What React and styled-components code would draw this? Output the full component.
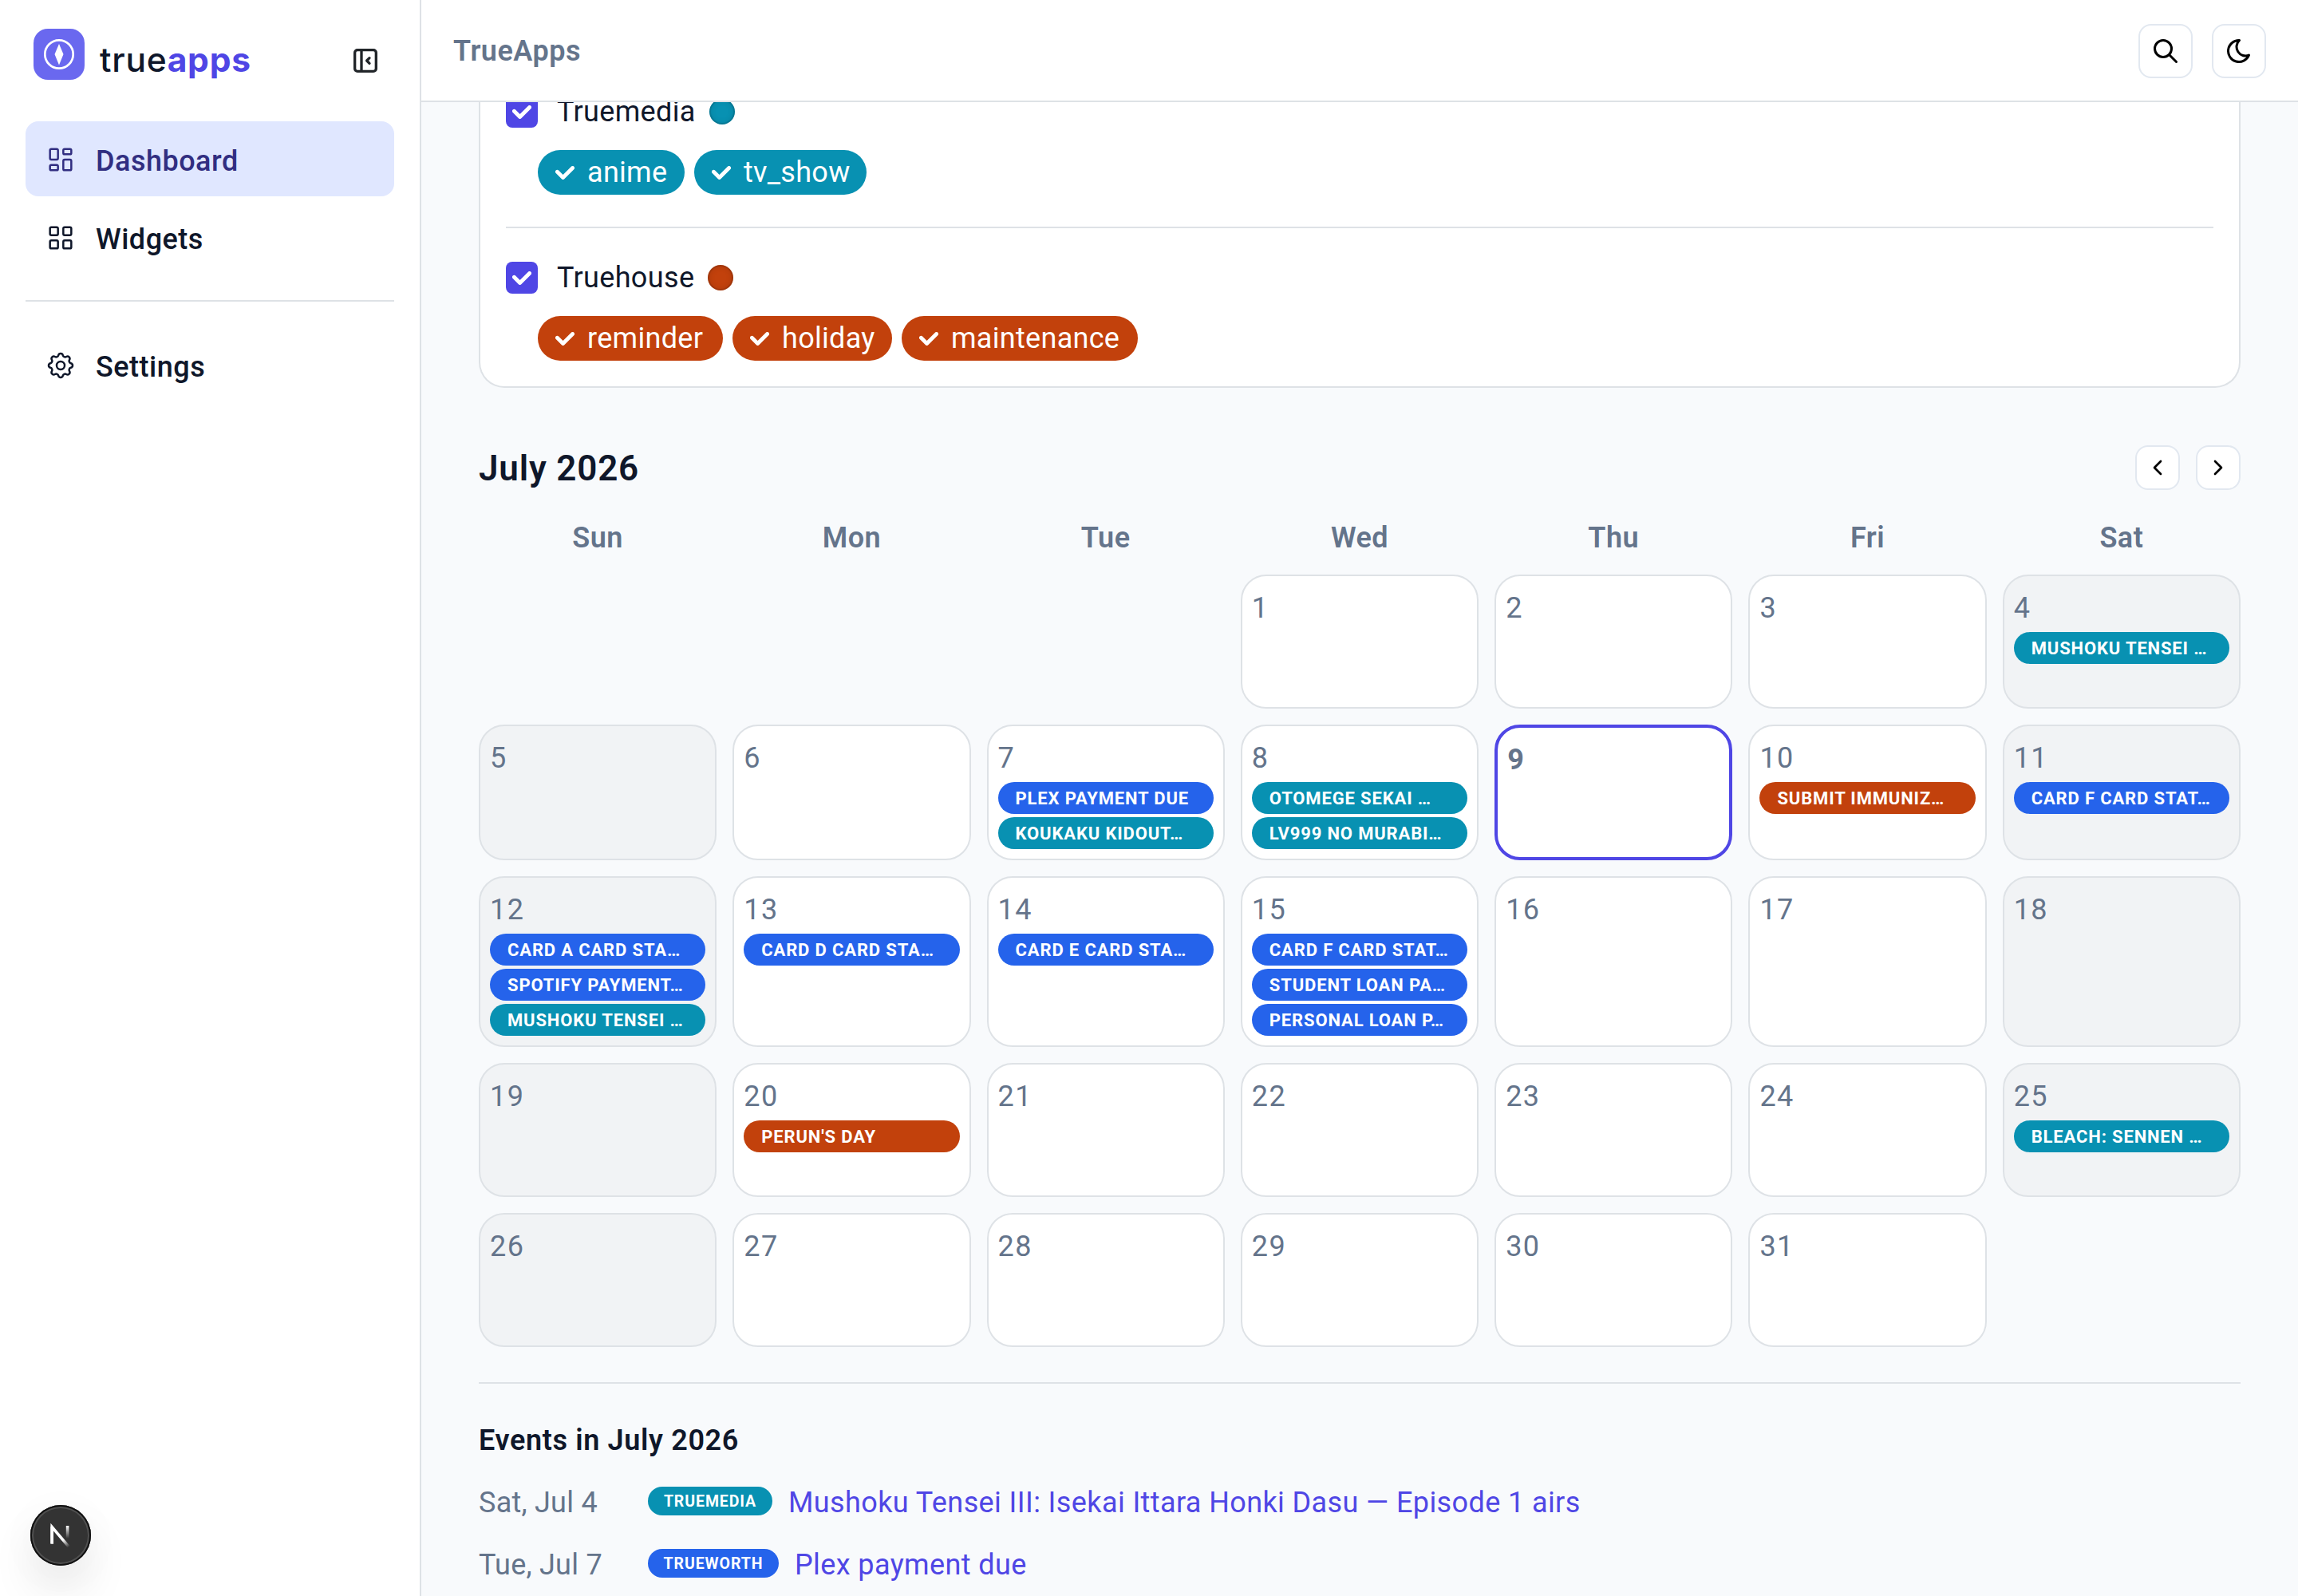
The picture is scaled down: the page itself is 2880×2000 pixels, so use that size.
import React from "react"
import styled, { createGlobalStyle } from "styled-components"
import {
  TbChevronLeft,
  TbChevronRight,
  TbLayoutDashboard,
  TbLayoutGrid,
  TbLayoutSidebarLeftCollapse,
  TbMoon,
  TbSearch,
  TbSettings,
} from "react-icons/tb"

const colors = {
  media: "#0891b2",
  house: "#c2410c",
  worth: "#2563eb",
  primary: "#4f46e5",
  text: "#0f172a",
  dimmed: "#64748b",
  border: "#dee2e6",
}

const GlobalStyle = createGlobalStyle`
  * {
    box-sizing: border-box;
  }
  body {
    margin: 0;
    font-family: Roboto, "Liberation Sans", sans-serif;
    font-size: 36px;
    line-height: 54px;
    color: ${colors.text};
    background: #f8fafc;
    overflow: hidden;
  }
`

const Shell = styled.div`
  display: grid;
  grid-template-columns: 528px 1fr;
  grid-template-rows: 2000px;
  height: 2000px;
  overflow: hidden;
`

const Sidebar = styled.aside`
  display: flex;
  flex-direction: column;
  padding: 36px 32px;
  background: #fff;
  border-right: 2px solid ${colors.border};
`

const Brand = styled.div`
  display: flex;
  align-items: flex-start;
  height: 116px;
  padding-left: 10px;

  > svg:last-child {
    margin: 20px 16px 0 auto;
    color: #212529;
  }
`

const Wordmark = styled.span`
  margin: 12px 0 0 19px;
  font-family: Inter, sans-serif;
  font-size: 42.5px;
  font-weight: 500;
  letter-spacing: 0.8px;

  b {
    color: ${colors.primary};
    font-weight: 700;
  }
`

const NavLink = styled.a`
  display: flex;
  align-items: center;
  height: 94px;
  margin-bottom: 4px;
  padding: 6px 24px 0;
  border-radius: 16px;
  font-weight: 500;
  letter-spacing: 0.5px;
  color: ${p => (p.$active ? "#312e81" : colors.text)};
  background: ${p => (p.$active ? "#e0e7ff" : "transparent")};

  svg {
    margin: -4px 24px 0 0;
    stroke-width: 1.5;
  }
`

const Divider = styled.hr`
  width: 100%;
  height: 2px;
  margin: ${p => p.$margin};
  border: 0;
  background: ${colors.border};
`

const Main = styled.main`
  display: flex;
  flex-direction: column;
  min-width: 0;
  min-height: 0;
`

const Header = styled.header`
  display: flex;
  align-items: center;
  gap: 24px;
  flex: none;
  height: 128px;
  padding: 2px 40px 0;
  background: #fff;
  border-bottom: 2px solid ${colors.border};
`

const AppName = styled.div`
  margin-right: auto;
  font-weight: 600;
  letter-spacing: 0.5px;
  color: ${colors.dimmed};
`

const IconButton = styled.button`
  display: grid;
  place-items: center;
  width: ${p => p.$size}px;
  height: ${p => p.$size}px;
  padding: 0;
  border: 2px solid #e2e8f0;
  border-radius: 16px;
  background: #fff;
  color: #000;
`

const Content = styled.div`
  flex: 1;
  min-height: 0;
  overflow: hidden;
  padding: 0 72px;
`

// the filter card is scrolled under the header, only its lower part shows
const FilterCard = styled.section`
  display: flow-root;
  height: 358px;
  padding: 0 32px;
  border: 2px solid ${colors.border};
  border-top: 0;
  border-radius: 0 0 32px 32px;
  background: #fff;

  > div:first-child {
    margin-top: -8px;
  }
`

const Source = styled.div`
  display: flex;
  align-items: center;
  height: 40px;
  letter-spacing: 0.35px;
`

const Checkbox = styled.span`
  display: grid;
  place-items: center;
  width: 40px;
  height: 40px;
  margin-right: 24px;
  border-radius: 8px;
  background: ${colors.primary};
`

const Swatch = styled.span`
  width: 32px;
  height: 32px;
  margin-left: 17px;
  border-radius: 50%;
  background: ${p => colors[p.$kind]};
  box-shadow: inset 0 0 0 2px rgba(0, 0, 0, 0.1), inset 0 0 8px rgba(0, 0, 0, 0.15);
`

const Chips = styled.div`
  display: flex;
  gap: 12px;
  margin: 28px 0 0 40px;
`

const Chip = styled.span`
  display: flex;
  align-items: center;
  gap: 16px;
  width: ${p => p.$width}px;
  height: 56px;
  padding-left: 22px;
  border-radius: 28px;
  color: #fff;
  letter-spacing: 0.3px;
  background: ${p => colors[p.$kind]};
`

const MonthBar = styled.div`
  display: flex;
  align-items: center;
  gap: 20px;
  height: 56px;
  margin-top: 72px;

  h2 {
    margin: 2px auto 0 0;
    font-size: 44px;
    font-weight: 600;
    letter-spacing: 0.8px;
  }
`

const Week = styled.div`
  display: grid;
  grid-template-columns: repeat(7, 1fr);
  column-gap: 20px;
  margin-top: 33px;
  height: 73px;
  font-weight: 600;
  letter-spacing: 0.5px;
  text-align: center;
  color: ${colors.dimmed};
`

const Month = styled.div`
  display: grid;
  grid-template-columns: repeat(7, minmax(0, 1fr));
  grid-auto-rows: minmax(168px, auto);
  gap: 20px;
`

const Day = styled.div`
  grid-column-start: ${p => p.$start || "auto"};
  display: flex;
  flex-direction: column;
  gap: 4px;
  padding: 12px;
  border: 2px solid ${colors.border};
  border-radius: 32px;
  background: ${p => (p.$weekend ? "#f1f3f5" : "#fff")};
  ${p => p.$today && `border: 4px solid ${colors.primary}; font-weight: 700;`}
`

const DayNumber = styled.span`
  height: 54px;
  padding-top: 1px;
  letter-spacing: 1.4px;
  color: ${colors.dimmed};
`

const EventPill = styled.span`
  height: 40px;
  padding: 0 20px 0 22px;
  border-radius: 20px;
  font-size: 22px;
  font-weight: 700;
  line-height: 41px;
  letter-spacing: 0.85px;
  white-space: nowrap;
  overflow: hidden;
  color: #fff;
  background: ${p => colors[p.$kind]};
`

const ListTitle = styled.h3`
  margin: 44px 0 23px;
  font-size: 36px;
  font-weight: 600;
  letter-spacing: 0.65px;
`

const EventRow = styled.div`
  display: flex;
  align-items: center;
  height: 54px;
  margin-bottom: 24px;

  time {
    width: 212px;
    padding-top: 2px;
    letter-spacing: 0.25px;
    color: ${colors.dimmed};
  }
  a {
    padding-top: 2px;
    letter-spacing: 0.4px;
    color: ${colors.primary};
  }
`

const SourceBadge = styled.span`
  width: ${p => p.$width}px;
  height: 36px;
  margin: -2px 20px 0 0;
  border-radius: 18px;
  font-size: 19.5px;
  font-weight: 700;
  line-height: 37px;
  letter-spacing: 0.9px;
  text-align: center;
  color: #fff;
  background: ${p => colors[p.$kind]};
`

const DevBadge = styled.div`
  display: grid;
  place-items: center;
  width: 76px;
  height: 76px;
  margin: auto 0 2px 6px;
  border-radius: 50%;
  background: #333;
  box-shadow: inset 0 0 0 2px #111, inset 0 0 0 4px #505050,
    0 32px 64px -16px rgba(0, 0, 0, 0.24), 0 8px 60px rgba(0, 0, 0, 0.03);
`

const CheckMark = () => (
  <svg width="24" height="17" viewBox="0 0 10 7" fill="#fff">
    <path d="M4 4.586L1.707 2.293A1 1 0 1 0 .293 3.707l3 3a.997.997 0 0 0 1.414 0l5-5A1 1 0 1 0 8.293.293L4 4.586z" />
  </svg>
)

const Logo = () => (
  <svg width="64" height="64" viewBox="0 0 64 64">
    <rect width="64" height="64" rx="18" fill="#6a68ef" />
    <circle cx="32" cy="32" r="17.7" fill="none" stroke="#fff" strokeWidth="2.7" />
    <path d="M32 19l5.5 13L32 45.5 26.5 32z" fill="#fff" />
  </svg>
)

const NextLogo = () => (
  <svg width="28" height="30" viewBox="0 0 28 30" fill="none">
    <defs>
      <linearGradient id="diag" x1="14" y1="15" x2="25" y2="29" gradientUnits="userSpaceOnUse">
        <stop offset="0.35" stopColor="#fff" />
        <stop offset="1" stopColor="#fff" stopOpacity="0" />
      </linearGradient>
      <linearGradient id="stem" x1="0" y1="3" x2="0" y2="19" gradientUnits="userSpaceOnUse">
        <stop stopColor="#fff" />
        <stop offset="1" stopColor="#fff" stopOpacity="0" />
      </linearGradient>
    </defs>
    <path d="M3.2 25.5V4.6l21.3 25" stroke="url(#diag)" strokeWidth="3.6" />
    <path d="M3.2 25.5V4" stroke="#fff" strokeWidth="3.6" />
    <path d="M22.6 3v16" stroke="url(#stem)" strokeWidth="3.6" />
  </svg>
)

const sources = [
  { name: "Truemedia", kind: "media", chips: [["anime", 184], ["tv_show", 216]] },
  { name: "Truehouse", kind: "house", chips: [["reminder", 232], ["holiday", 200], ["maintenance", 296]] },
]

const events = {
  4: [["media", "MUSHOKU TENSEI …"]],
  7: [["worth", "PLEX PAYMENT DUE"], ["media", "KOUKAKU KIDOUT…"]],
  8: [["media", "OTOMEGE SEKAI …"], ["media", "LV999 NO MURABI…"]],
  10: [["house", "SUBMIT IMMUNIZ…"]],
  11: [["worth", "CARD F CARD STAT…"]],
  12: [["worth", "CARD A CARD STA…"], ["worth", "SPOTIFY PAYMENT…"], ["media", "MUSHOKU TENSEI …"]],
  13: [["worth", "CARD D CARD STA…"]],
  14: [["worth", "CARD E CARD STA…"]],
  15: [["worth", "CARD F CARD STAT…"], ["worth", "STUDENT LOAN PA…"], ["worth", "PERSONAL LOAN P…"]],
  20: [["house", "PERUN'S DAY"]],
  25: [["media", "BLEACH: SENNEN …"]],
}

const weekdays = ["Sun", "Mon", "Tue", "Wed", "Thu", "Fri", "Sat"]
const FIRST_WEEKDAY = 3
const TODAY = 9

const isWeekend = day => [0, 6].includes((day - 1 + FIRST_WEEKDAY) % 7)

const Calendar = () => (
  <Month>
    {Array.from({ length: 31 }, (_, i) => i + 1).map(day => (
      <Day
        key={day}
        $start={day === 1 ? FIRST_WEEKDAY + 1 : null}
        $weekend={isWeekend(day)}
        $today={day === TODAY}
      >
        <DayNumber>{day}</DayNumber>
        {(events[day] || []).map(([kind, title]) => (
          <EventPill key={title} $kind={kind}>{title}</EventPill>
        ))}
      </Day>
    ))}
  </Month>
)

const App = () => (
  <>
    <GlobalStyle />
    <Shell>
      <Sidebar>
        <Brand>
          <Logo />
          <Wordmark>true<b>apps</b></Wordmark>
          <TbLayoutSidebarLeftCollapse size="40" />
        </Brand>
        <NavLink $active><TbLayoutDashboard size="40" />Dashboard</NavLink>
        <NavLink><TbLayoutGrid size="40" />Widgets</NavLink>
        <Divider $margin="28px 0 32px" />
        <NavLink><TbSettings size="40" />Settings</NavLink>
        <DevBadge><NextLogo /></DevBadge>
      </Sidebar>
      <Main>
        <Header>
          <AppName>TrueApps</AppName>
          <IconButton $size={68}><TbSearch size="36" /></IconButton>
          <IconButton $size={68}><TbMoon size="36" /></IconButton>
        </Header>
        <Content>
          <FilterCard>
            {sources.map(({ name, kind, chips }, i) => (
              <div key={name}>
                {i > 0 && <Divider $margin="40px 0 42px" />}
                <Source>
                  <Checkbox><CheckMark /></Checkbox>
                  {name}
                  <Swatch $kind={kind} />
                </Source>
                <Chips>
                  {chips.map(([label, width]) => (
                    <Chip key={label} $kind={kind} $width={width}><CheckMark />{label}</Chip>
                  ))}
                </Chips>
              </div>
            ))}
          </FilterCard>
          <MonthBar>
            <h2>July 2026</h2>
            <IconButton $size={56}><TbChevronLeft size="32" /></IconButton>
            <IconButton $size={56}><TbChevronRight size="32" /></IconButton>
          </MonthBar>
          <Week>
            {weekdays.map(name => <span key={name}>{name}</span>)}
          </Week>
          <Calendar />
          <Divider $margin="44px 0 0" />
          <ListTitle>Events in July 2026</ListTitle>
          <EventRow>
            <time>Sat, Jul 4</time>
            <SourceBadge $kind="media" $width={156}>TRUEMEDIA</SourceBadge>
            <a>Mushoku Tensei III: Isekai Ittara Honki Dasu — Episode 1 airs</a>
          </EventRow>
          <EventRow>
            <time>Tue, Jul 7</time>
            <SourceBadge $kind="worth" $width={164}>TRUEWORTH</SourceBadge>
            <a>Plex payment due</a>
          </EventRow>
        </Content>
      </Main>
    </Shell>
  </>
)

export default App
